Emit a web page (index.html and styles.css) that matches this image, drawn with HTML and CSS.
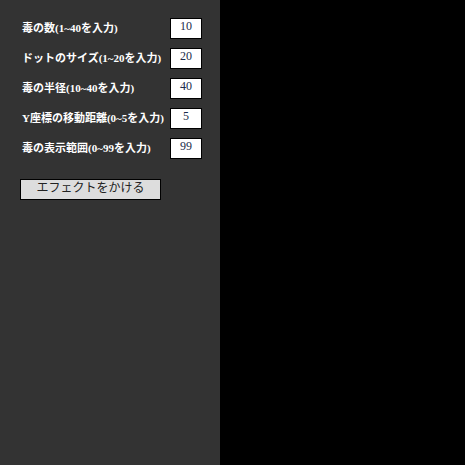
FILE: index.html
```html
<!DOCTYPE html>
<html lang="ja">
<head>
  <meta charset="UTF-8" />
  <title>毒エフェクト</title>
  <link rel="stylesheet" href="styles.css">
</head>
<body>

  <!-- 設定パネル -->
  <div class="panel">
    <form class="settings">
      <div class="row">
        <label for="count">毒の数(1~40を入力)</label>
        <input type="text" id="count" value="10" />
      </div>
      <div class="row">
        <label for="dot">ドットのサイズ(1~20を入力)</label>
        <input type="text" id="dot" value="20" />
      </div>
      <div class="row">
        <label for="radius">毒の半径(10~40を入力)</label>
        <input type="text" id="radius" value="40" />
      </div>
      <div class="row">
        <label for="moveY">Y座標の移動距離(0~5を入力)</label>
        <input type="text" id="moveY" value="5" />
      </div>
      <div class="row">
        <label for="range">毒の表示範囲(0~99を入力)</label>
        <input type="text" id="range" value="99" />
      </div>

      <button type="button" class="apply">エフェクトをかける</button>
    </form>
  </div>

  <!-- 描画エリア -->
  <div class="canvas-area"></div>

</body>
</html>
```

FILE: styles.css
```css
* {
  box-sizing: border-box;
  margin: 0;
  padding: 0;
}

html, body {
  height: 100%;
}

body {
  display: flex;
  background: #000;
  font-family: "Liberation Serif", "Noto Sans CJK JP", serif;
}

.panel {
  width: 220px;
  height: 100%;
  background: #333;
  padding: 18px 0 0 20px;
}

.settings {
  display: flex;
  flex-direction: column;
  gap: 9px;
}

.row {
  display: flex;
  align-items: center;
  height: 21px;
}

.row label {
  width: 150px;
  padding: 0 0 4px 2px;
  color: #fff;
  font-size: 11px;
  font-weight: bold;
  white-space: nowrap;
}

.row input {
  width: 32px;
  height: 21px;
  border: 1px solid #000;
  background: #fff;
  color: #1a2a4a;
  font-family: "Liberation Serif", serif;
  font-size: 12px;
  text-align: center;
  padding-bottom: 5px;
}

.apply {
  width: 141px;
  height: 21px;
  margin-top: 11px;
  background: #ddd;
  border: 1px solid #000;
  color: #222;
  font-family: "Noto Sans CJK JP", sans-serif;
  font-size: 12px;
  line-height: 14px;
  padding-bottom: 5px;
}

.canvas-area {
  flex: 1;
  height: 100%;
  background: #000;
}
```
